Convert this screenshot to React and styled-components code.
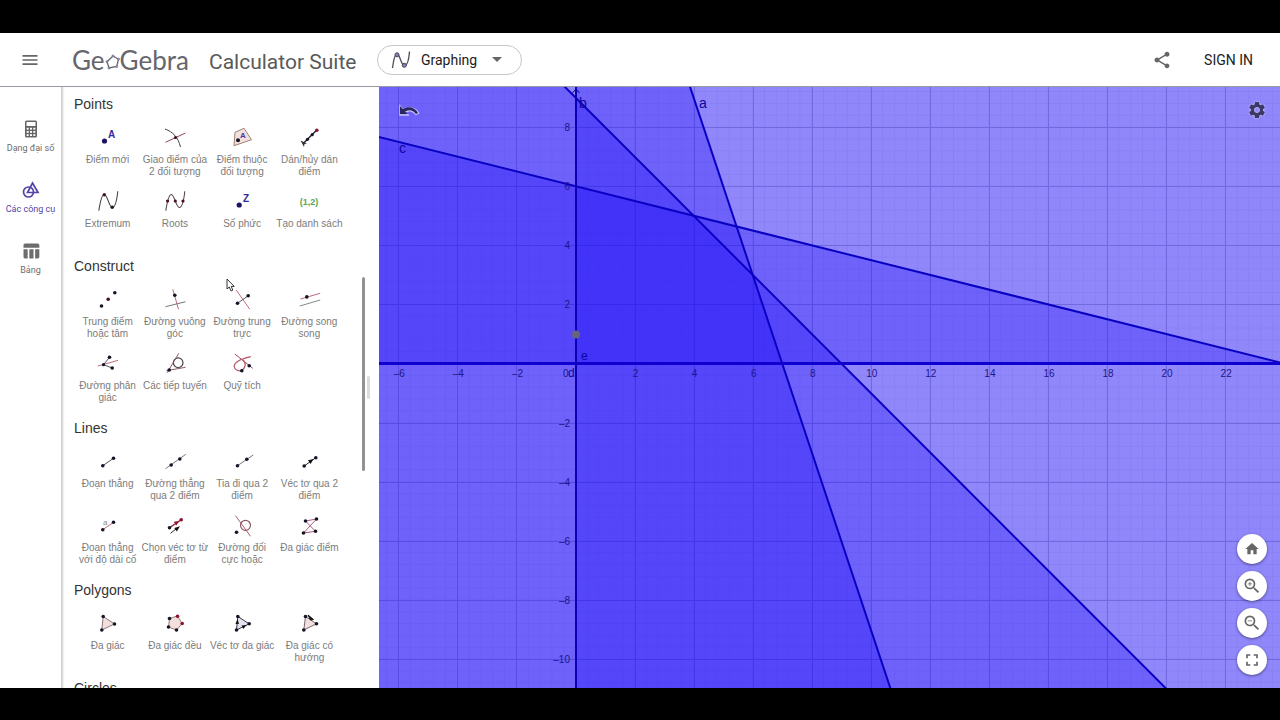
import React from "react";
import styled, { createGlobalStyle } from "styled-components";
import {
  MdMenu,
  MdShare,
  MdSettings,
  MdHome,
  MdOutlineZoomIn,
  MdOutlineZoomOut,
  MdFullscreen,
  MdTableChart,
} from "react-icons/md";

const GlobalStyle = createGlobalStyle`
  * { box-sizing: border-box; }
  body { margin: 0; background: #000; font-family: "Liberation Sans", Arial, sans-serif; }
  button, select { font: inherit; color: inherit; background: none; border: 0; padding: 0; margin: 0; cursor: pointer; }
  svg { display: block; flex: none; }
`;

const Page = styled.div`
  display: flex;
  flex-direction: column;
  height: 100vh;
  padding: 33px 0 32px;
  background: #000;
`;

const Header = styled.header`
  display: flex;
  align-items: center;
  flex: none;
  height: 54px;
  padding: 0 27px 0 20px;
  background: #fff;
  border-bottom: 1px solid #9a9aa2;
  color: #666;
`;

const IconButton = styled.button`
  display: flex;
  align-items: center;
  justify-content: center;
  color: ${(p) => p.$color || "#666"};
`;

const Logo = styled.a`
  display: flex;
  align-items: center;
  margin-left: 32px;
  width: 118px;
  font: 400 26px/30px Lato, sans-serif;
  color: #66666c;
  text-decoration: none;
`;

const Title = styled.h1`
  margin: 4px 0 0 19px;
  width: 150px;
  font: 400 21px/26px Roboto, sans-serif;
  color: #5a5a5a;
  white-space: nowrap;
`;

const AppPicker = styled.label`
  display: flex;
  align-items: center;
  position: relative;
  margin-left: 18px;
  width: 145px;
  height: 30px;
  border: 1px solid #c6c6c8;
  border-radius: 16px;
  padding: 0 19px 0 13px;
  color: #1c1c1c;
`;

const AppSelect = styled.select`
  appearance: none;
  flex: 1;
  min-width: 0;
  margin-left: 10px;
  font: 400 14px/18px Roboto, sans-serif;
  outline: none;
`;

const HeaderEnd = styled.div`
  display: flex;
  align-items: center;
  gap: 32px;
  margin-left: auto;
`;

const SignIn = styled.button`
  font: 400 14px/18px Roboto, sans-serif;
  color: #222;
`;

const Main = styled.main`
  display: flex;
  flex: 1;
  min-height: 0;
  background: #fff;
`;

const Rail = styled.nav`
  display: flex;
  flex-direction: column;
  flex: none;
  width: 61px;
  padding-top: 32px;
`;

const RailItem = styled.button`
  display: flex;
  flex-direction: column;
  align-items: center;
  gap: 3px;
  height: 61px;
  font: 400 9px/12px Roboto, "Liberation Sans", sans-serif;
  color: ${(p) => (p.$active ? "#5145a8" : "#6c6c6c")};
  white-space: nowrap;
`;

const ToolPanel = styled.section`
  position: relative;
  flex: none;
  width: 318px;
  padding-left: 13px;
  overflow: hidden;
  box-shadow: inset 3px 0 2px -1px #cfcfcf;
`;

const Category = styled.h2`
  margin: 0;
  font: 400 14px/34px "Liberation Sans", Arial, sans-serif;
  color: #333;
`;

const ToolGrid = styled.div`
  display: grid;
  grid-template-columns: repeat(4, 1fr);
  grid-auto-rows: 64px;
  width: 269px;
`;

const Tool = styled.button`
  display: flex;
  flex-direction: column;
  align-items: center;
  gap: 1px;
`;

const ToolLabel = styled.span`
  font-size: 10px;
  line-height: 12px;
  color: #7c7c7c;
  text-align: center;
  white-space: pre;
`;

const ScrollThumb = styled.div`
  position: absolute;
  top: 190px;
  right: 14px;
  width: 3px;
  height: 194px;
  border-radius: 2px;
  background: #929292;
`;

const Splitter = styled.div`
  position: absolute;
  top: 289px;
  right: 9px;
  width: 3px;
  height: 23px;
  border-radius: 2px;
  background: #dcdcdc;
`;

const Pointer = styled.svg`
  position: absolute;
  top: 191px;
  left: 165px;
`;

const GraphView = styled.section`
  position: relative;
  flex: 1;
  min-width: 0;
  overflow: hidden;
`;

const UndoSlot = styled.div`
  position: absolute;
  top: 15px;
  left: 19px;
`;

const SettingsSlot = styled.div`
  position: absolute;
  top: 13px;
  right: 13px;
  filter: drop-shadow(0 0 1px #d8d4ff);
`;

const ZoomStack = styled.div`
  position: absolute;
  right: 13px;
  bottom: 13px;
  display: flex;
  flex-direction: column;
  gap: 7px;
`;

const RoundButton = styled(IconButton)`
  width: 30px;
  height: 30px;
  border-radius: 50%;
  background: #fff;
  box-shadow: 0 1px 3px rgba(0, 0, 0, 0.45);
`;

const Dot = ({ x, y, r = 2, c = "#151528" }) => <circle cx={x} cy={y} r={r} fill={c} />;
const Seg = ({ d, c = "#55555f", w = 1 }) => (
  <path d={d} stroke={c} strokeWidth={w} fill="none" />
);
const RED = "#c4697c";
const DARK_RED = "#8c1230";
const PINK = "#f3dfdc";

const groups = [
  {
    title: "Points",
    tools: [
      ["Điểm mới", <>
        <Dot x={12.5} y={20} r={2.6} c="#1b1464" />
        <text x="16" y="17" fontSize="10" fontWeight="700" fill="#332a9c">A</text>
      </>],
      ["Giao điểm của\n2 đối tượng", <>
        <Seg d="M6 8C14 11 19 16 21.500 26" c="#444" />
        <Seg d="M6.500 21.300L26.500 12" c="#8a4a55" />
        <Dot x={16.5} y={16.5} r={1.6} c="#40101c" />
      </>],
      ["Điểm thuộc\nđối tượng", <>
        <path d="M9 11.300L18 7.300L25.500 18.700L8 24.700Z" fill={PINK} stroke="#9b8277" />
        <text x="14" y="17" fontSize="8" fontWeight="700" fill="#4338a8">A</text>
        <Dot x={12} y={19.3} />
      </>],
      ["Dán/hủy dán\nđiểm", <>
        <Seg d="M10.500 22.300L23.800 9" c="#222" w={1.4} />
        <Dot x={23.8} y={9.2} r={1.8} c={DARK_RED} />
        <Dot x={19.2} y={13.7} r={1.6} />
        <Dot x={14.5} y={18.3} r={1.6} />
        <path d="M7.500 19.500L14 22.500L11.500 23L11 26Z" fill="#333" />
      </>],
      ["Extremum", <>
        <Seg d="M6.800 25.700C8 18 9.500 9.500 12.300 9.500C15.500 9.500 17 22.500 20.300 22.500C23 22.500 25 14 25.800 6.300" c="#444" w={1.1} />
        <Dot x={12.3} y={9.7} r={1.7} c="#4a1020" />
        <Dot x={20.2} y={22.3} r={1.7} />
      </>],
      ["Roots", <>
        <Seg d="M6.800 25.700C8 18 9.500 9.500 12.300 9.500C15.500 9.500 17 22.500 20.300 22.500C23 22.500 25 14 25.800 6.300" c="#55454b" w={1.1} />
        <Dot x={8.6} y={16} r={1.6} c="#4a1020" />
        <Dot x={16.3} y={16} r={1.6} c="#4a1020" />
        <Dot x={24} y={16} r={1.6} c="#4a1020" />
      </>],
      ["Số phức", <>
        <Dot x={13.2} y={20} r={2.6} c="#1b1464" />
        <text x="17" y="17" fontSize="10" fontWeight="700" fill="#332a9c">Z</text>
      </>],
      ["Tạo danh sách", <>
        <text x="16" y="20" fontSize="9" fontWeight="700" textAnchor="middle" fill="#57a857">(1,2)</text>
      </>],
    ],
  },
  {
    title: "Construct",
    tools: [
      ["Trung điểm\nhoặc tâm", <>
        <Dot x={9.5} y={23} r={1.8} /><Dot x={16.2} y={16.3} r={1.8} c="#4a1020" /><Dot x={22.8} y={9.7} r={1.8} />
      </>],
      ["Đường vuông\ngóc", <>
        <Seg d="M13.800 6.300L19.500 26.300" c={RED} />
        <Seg d="M6.500 23.700L26.500 18.700" c="#777" />
        <Dot x={15.8} y={12.3} r={1.8} />
      </>],
      ["Đường trung\ntrực", <>
        <Seg d="M10.200 7L23.800 26.300" c={RED} />
        <Seg d="M11.500 20.300L22.200 12.700" />
        <Dot x={11.5} y={20.3} r={1.8} /><Dot x={22.2} y={12.7} r={1.8} />
      </>],
      ["Đường song\nsong", <>
        <Seg d="M7.500 16L27.200 10.300" c={RED} />
        <Seg d="M6.800 23L27.200 17" c="#888" />
        <Dot x={13.8} y={13.9} r={1.8} />
      </>],
      ["Đường phân\ngiác", <>
        <Seg d="M5.800 19L26.200 13.300" c={RED} />
        <Seg d="M17.500 10.300L11.500 17.700L20.200 21" />
        <Dot x={11.5} y={17.7} r={1.6} /><Dot x={17.5} y={10.3} r={1.8} /><Dot x={20.2} y={21} r={1.8} />
      </>],
      ["Các tiếp tuyến", <>
        <circle cx="19.200" cy="15.700" r="4.800" fill="none" stroke="#444" strokeWidth="1.200" />
        <Seg d="M8.200 25.700L19.800 6.300" c="#8a5a64" />
        <Seg d="M7.500 23.700L26.500 20.300" c="#8a5a64" />
        <Dot x={10.2} y={23} r={1.8} />
      </>],
      ["Quỹ tích", <>
        <Seg d="M8.800 7L26.800 21.300" c="#a3465a" />
        <Seg d="M24.800 9.700C15 12 8 15 8.200 19.500C8.500 23 13 25 16 23C19 21 21 17 17 13" c="#b5566a" w={1.2} />
        <Dot x={15.8} y={23.7} r={1.8} /><Dot x={23.2} y={18.8} r={1.8} />
      </>],
    ],
  },
  {
    title: "Lines",
    tools: [
      ["Đoạn thẳng", <>
        <Seg d="M10.800 20.700L21.500 13.300" /><Dot x={10.8} y={20.7} r={1.8} /><Dot x={21.5} y={13.3} r={1.8} />
      </>],
      ["Đường thẳng\nqua 2 điểm", <>
        <Seg d="M6.500 23.700L26.800 9.300" c="#777" /><Dot x={12.2} y={20} r={1.8} /><Dot x={20.8} y={14} r={1.8} />
      </>],
      ["Tia đi qua 2\nđiểm", <>
        <Seg d="M11.500 20.700L27.200 10" c="#777" /><Dot x={11.5} y={20.7} r={1.8} /><Dot x={20.8} y={14.2} r={1.8} />
      </>],
      ["Véc tơ qua 2\nđiểm", <>
        <Seg d="M11.200 21L22.800 12.700" c="#222" /><Dot x={11.2} y={21} r={1.8} /><Dot x={22.8} y={12.7} r={1.8} />
        <path d="M20.500 14L15 15.200L17.600 19Z" fill="#111" />
      </>],
      ["Đoạn thẳng\nvới độ dài cố", <>
        <Seg d="M10.800 20.700L21.500 13.300" c={RED} /><Dot x={10.8} y={20.7} r={1.8} /><Dot x={21.5} y={13.3} r={1.8} />
        <text x="11" y="16" fontSize="8" fill="#888">a</text>
      </>],
      ["Chọn véc tơ từ\nđiểm", <>
        <Seg d="M10.500 18.700L22.200 10.700" c={DARK_RED} w={1.3} />
        <path d="M20 12L14.800 12.800L17.300 16.600Z" fill={DARK_RED} />
        <Seg d="M11.500 24.300L17 20" c="#333" /><path d="M21 17.300L15.300 19L17.800 22.600Z" fill="#111" />
        <Dot x={10.5} y={18.7} r={1.8} /><Dot x={22.2} y={10.7} r={1.8} c={DARK_RED} />
      </>],
      ["Đường đối\ncực hoặc", <>
        <circle cx="19.500" cy="16.300" r="5" fill="none" stroke="#8a5a64" strokeWidth="1.200" />
        <Seg d="M9.500 6.700L24.500 27.300" c="#a85c6c" /><Dot x={10.5} y={23.3} r={1.8} />
      </>],
      ["Đa giác điểm", <>
        <Seg d="M10.500 24L22.500 22.300L12.500 12L23.500 10Z" c="#b05a78" />
        <Dot x={12.5} y={12} r={1.8} /><Dot x={23.5} y={10} r={1.8} /><Dot x={10.5} y={24} r={1.8} /><Dot x={22.5} y={22.3} r={1.8} />
      </>],
    ],
  },
  {
    title: "Polygons",
    tools: [
      ["Đa giác", <>
        <path d="M11.200 9.500L22.500 17L9.800 23Z" fill={PINK} stroke="#8b7880" />
        <Dot x={11.2} y={9.5} r={1.8} /><Dot x={22.5} y={17} r={1.8} /><Dot x={9.8} y={23} r={1.8} />
      </>],
      ["Đa giác đều", <>
        <path d="M10.500 11.500L18.500 9L23.200 16.500L17.500 23L9.500 20Z" fill={PINK} stroke="#9b8277" />
        <Dot x={10.5} y={11.5} r={1.8} /><Dot x={18.5} y={9.3} r={1.8} c={DARK_RED} /><Dot x={23.2} y={16.5} r={1.8} c={DARK_RED} />
        <Dot x={17.5} y={23} r={1.8} /><Dot x={9.5} y={20} r={1.8} />
      </>],
      ["Véc tơ đa giác", <>
        <path d="M11.800 9.500L23.200 16.800L10.500 23Z" fill="#e6e3f0" stroke="#333344" />
        <path d="M11.500 12L13 17L9.500 17Z" fill="#111" /><path d="M20.500 18L15.500 18.500L17.300 22Z" fill="#111" />
        <Dot x={11.8} y={9.5} r={1.8} /><Dot x={23.2} y={16.8} r={1.8} /><Dot x={10.5} y={23} r={1.8} />
      </>],
      ["Đa giác có\nhướng", <>
        <path d="M12.500 9.500L23.500 16.800L10.800 23Z" fill={PINK} stroke="#776870" />
        <path d="M15 8L20.500 12.500L17.500 13Z" fill="#111" stroke="#111" />
        <Dot x={12.5} y={9.5} r={1.8} /><Dot x={23.5} y={16.8} r={1.8} /><Dot x={10.8} y={23} r={1.8} />
      </>],
    ],
  },
  { title: "Circles", tools: [] },
];

// Plane coordinates to pixels inside the graph view.
const X = (x) => 196.5 + x * 29.53;
const Y = (y) => 276.5 - y * 29.55;
const pts = (list) => list.map(([x, y]) => `${X(x)},${Y(y)}`).join(" ");

const halfPlanes = [
  [[-3, 30], [17, -30], [-60, -30], [-60, 30]],
  [[-21, 30], [39, -30], [-60, -30], [-60, 30]],
  [[-60, 21], [80, -14], [80, -30], [-60, -30]],
  [[0, 30], [80, 30], [80, -30], [0, -30]],
  [[-60, 0], [80, 0], [80, 30], [-60, 30]],
];

const range = (from, to) => Array.from({ length: to - from + 1 }, (_, i) => from + i);
const gridX = range(-4, 40).map((n) => n * 2);
const gridY = range(-15, 5).map((n) => n * 2);
const ticksX = range(-3, 11).map((n) => n * 2).filter(Boolean);
const ticksY = range(-5, 4).map((n) => n * 2).filter(Boolean);
const minus = (n) => String(n).replace("-", "–");

const PlotSvg = styled.svg`
  width: 100%;
  height: 100%;
  background: #fff;
`;

const TickText = styled.text`
  font: 400 10px "Liberation Sans", Arial, sans-serif;
  fill: #1d1685;
`;

const LineName = styled.text`
  font: 400 ${(p) => p.$size || 14}px "Liberation Sans", Arial, sans-serif;
  fill: #0d05a0;
`;

function Plot() {
  return (
    <PlotSvg role="img" aria-label="Graph">
      <g stroke="#f3f2f4" strokeWidth="1">
        {range(-20, 200).map((i) => (
          <line key={"v" + i} x1={X(i * 0.4)} x2={X(i * 0.4)} y1="0" y2="100%" />
        ))}
        {range(-75, 25).map((i) => (
          <line key={"h" + i} y1={Y(i * 0.4)} y2={Y(i * 0.4)} x1="0" x2="100%" />
        ))}
      </g>
      <g stroke="#c6c6cc" strokeWidth="1">
        {gridX.map((x) => (
          <line key={x} x1={Math.round(X(x)) + 0.5} x2={Math.round(X(x)) + 0.5} y1="0" y2="100%" />
        ))}
        {gridY.map((y) => (
          <line key={y} y1={Math.round(Y(y)) + 0.5} y2={Math.round(Y(y)) + 0.5} x1="0" x2="100%" />
        ))}
      </g>
      {halfPlanes.map((h, i) => (
        <polygon key={i} points={pts(h)} fill="#1400f6" fillOpacity="0.27" />
      ))}
      <g stroke="#0a00c4" strokeWidth="2" fill="none">
        <polyline points={pts([[-3, 30], [17, -30]])} />
        <polyline points={pts([[-21, 30], [39, -30]])} />
        <polyline points={pts([[-60, 21], [80, -14]])} />
      </g>
      <line x1="0" x2="100%" y1={Y(0)} y2={Y(0)} stroke="#0f00d0" strokeWidth="3" />
      <line x1={X(0) + 0.5} x2={X(0) + 0.5} y1="0" y2="100%" stroke="#0a00b4" strokeWidth="2" />
      <path d="M193.500 6L197 2L200.500 6" stroke="#0a0090" fill="none" />
      <circle cx={X(0) + 0.5} cy={Y(1) + 0.5} r="4" fill="#66657c" />
      {ticksX.map((x) => (
        <TickText key={x} x={X(x) + 1} y="290" textAnchor="middle">{minus(x)}</TickText>
      ))}
      {ticksY.map((y) => (
        <TickText key={y} x="191" y={Y(y) + 4} textAnchor="end">{minus(y)}</TickText>
      ))}
      <TickText x="184" y="290">0</TickText>
      <LineName $size={12} x="189" y="290">d</LineName>
      <LineName $size={12} x="202" y="273">e</LineName>
      <LineName x="320" y="21">a</LineName>
      <LineName x="200" y="21">b</LineName>
      <LineName x="20" y="66">c</LineName>
    </PlotSvg>
  );
}

const CalculatorIcon = () => (
  <svg width="20" height="20" viewBox="0 0 20 20">
    <rect x="4" y="1.500" width="12" height="17" rx="1.500" fill="#666" />
    <rect x="5.500" y="3" width="9" height="4" fill="#fff" />
    {[8.8, 12, 15.2].map((y) =>
      [5.7, 9, 12.3].map((x) => <rect key={x + "-" + y} x={x} y={y} width="2" height="1.800" fill="#fff" />)
    )}
  </svg>
);

const ShapesIcon = () => (
  <svg width="20" height="20" viewBox="0 0 20 20" fill="none" stroke="#5145a8" strokeWidth="1.700">
    <circle cx="7.500" cy="12" r="5" />
    <path d="M11.500 3L17 12.500H6.500Z" />
  </svg>
);

const CurveIcon = () => (
  <svg width="20" height="20" viewBox="0 0 20 20">
    <path d="M1.500 18C2.500 10 4 4 6 4C9 4 10 15.500 13.500 15.500C16.500 15.500 18 8 18.500 1.500" fill="none" stroke="#4c4c58" strokeWidth="1.300" />
    <circle cx="6" cy="4.800" r="2" fill="#8685b0" stroke="#44435a" />
    <circle cx="13.300" cy="15.300" r="2" fill="#8685b0" stroke="#44435a" />
  </svg>
);

const ring = [[8, 11], [13.5, 14.2], [11.7, 21.5], [4, 23], [2, 16.7]];

const PentagonO = () => (
  <svg width="15" height="30" viewBox="0 0 15 30">
    <path d={"M" + ring.map((p) => p.join(" ")).join("L") + "Z"} fill="none" stroke="#66666e" strokeWidth="1.300" />
    {ring.map(([x, y]) => (
      <circle key={x} cx={x} cy={y} r="1.100" fill="#9c9ce0" stroke="#66666e" strokeWidth="0.600" />
    ))}
  </svg>
);

export default function App() {
  return (
    <>
      <GlobalStyle />
      <Page>
        <Header>
          <IconButton aria-label="Menu"><MdMenu size={20} /></IconButton>
          <Logo href="#" aria-label="GeoGebra">
            <span>Ge</span><PentagonO /><span>Gebra</span>
          </Logo>
          <Title>Calculator Suite</Title>
          <AppPicker>
            <CurveIcon />
            <AppSelect aria-label="Calculator" defaultValue="Graphing">
              <option>Graphing</option>
            </AppSelect>
            <svg width="10" height="5" viewBox="0 0 10 5"><path d="M0 0H10L5 5Z" fill="#666" /></svg>
          </AppPicker>
          <HeaderEnd>
            <IconButton aria-label="Share"><MdShare size={20} /></IconButton>
            <SignIn>SIGN IN</SignIn>
          </HeaderEnd>
        </Header>
        <Main>
          <Rail>
            <RailItem><CalculatorIcon />Dạng đại số</RailItem>
            <RailItem $active><ShapesIcon />Các công cụ</RailItem>
            <RailItem><MdTableChart size={20} />Bảng</RailItem>
          </Rail>
          <ToolPanel>
            {groups.map((g) => (
              <React.Fragment key={g.title}>
                <Category>{g.title}</Category>
                <ToolGrid>
                  {g.tools.map(([label, art]) => (
                    <Tool key={label}>
                      <svg width="32" height="32" viewBox="0 0 32 32">{art}</svg>
                      <ToolLabel>{label}</ToolLabel>
                    </Tool>
                  ))}
                </ToolGrid>
              </React.Fragment>
            ))}
            <ScrollThumb />
            <Splitter />
            <Pointer width="9" height="14" viewBox="0 0 9 14">
              <path d="M1 1V11L3.300 9L5 13L6.800 12.200L5.200 8.400H8.200Z" fill="#fff" stroke="#333" />
            </Pointer>
          </ToolPanel>
          <GraphView>
            <Plot />
            <UndoSlot>
              <IconButton aria-label="Undo">
                <svg width="22" height="16" viewBox="0 0 22 16">
                  <g stroke="#c4c0f6" strokeWidth="1.500" fill="none">
                    <path d="M2 4V13H10L7 10.300C11 7.500 15 8.500 18 12.500L20.500 11C17 5.500 10 4.500 5 7.500Z" />
                  </g>
                  <path d="M2 4V12H10L7 9.500C11 7 15.500 8 18 12L20 11C17 5 10 4 5 7Z" fill="#2b2760" />
                </svg>
              </IconButton>
            </UndoSlot>
            <SettingsSlot>
              <IconButton $color="#3d3966" aria-label="Settings"><MdSettings size={20} /></IconButton>
            </SettingsSlot>
            <ZoomStack>
              <RoundButton aria-label="Home"><MdHome size={16} /></RoundButton>
              <RoundButton aria-label="Zoom in"><MdOutlineZoomIn size={20} /></RoundButton>
              <RoundButton aria-label="Zoom out"><MdOutlineZoomOut size={20} /></RoundButton>
              <RoundButton aria-label="Fullscreen"><MdFullscreen size={20} /></RoundButton>
            </ZoomStack>
          </GraphView>
        </Main>
      </Page>
    </>
  );
}
